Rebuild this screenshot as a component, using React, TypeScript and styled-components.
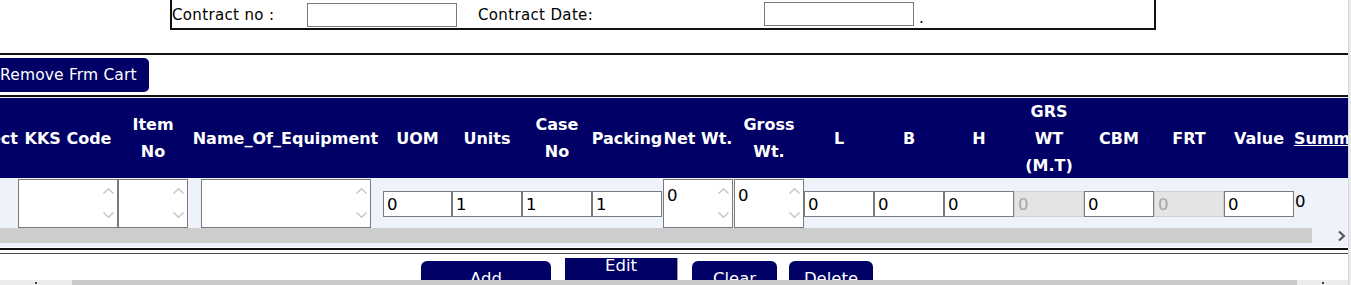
import React from "react";
import styled, { createGlobalStyle } from "styled-components";

const NAVY = "#000066";

const Global = createGlobalStyle`
  html, body { margin: 0; padding: 0; background: #fff; overflow: hidden; }
  body { font-family: "DejaVu Sans", "Verdana", sans-serif; color: #000; }
  * { box-sizing: border-box; }
`;

const Page = styled.div`
  width: 1348px;
  height: 285px;
  overflow: hidden;
  position: relative;
`;

const ContractBox = styled.div`
  margin-left: 170px;
  width: 986px;
  height: 30px;
  border-left: 2px solid #111;
  border-right: 2px solid #111;
  border-bottom: 2px solid #111;
  display: flex;
  align-items: center;
`;

const Label = styled.span<{ $w: number; $ml?: number }>`
  width: ${(p) => p.$w}px;
  margin-left: ${(p) => p.$ml ?? 0}px;
  font-size: 15px;
  letter-spacing: 0.35px;
  white-space: nowrap;
  padding-top: 2px;
`;

const FieldBox = styled.div<{ $mt?: number }>`
  width: 150px;
  height: 24px;
  border: 1px solid #7a7a7a;
  background: #fff;
  margin-top: ${(p) => p.$mt ?? 0}px;
`;

const Dot = styled.span`
  margin-left: 5px;
  font-size: 15px;
  padding-top: 8px;
`;

const Rule = styled.div<{ $mt: number; $c?: string; $h?: number }>`
  margin-top: ${(p) => p.$mt}px;
  height: ${(p) => p.$h ?? 2}px;
  background: ${(p) => p.$c ?? "#111"};
  width: 1348px;
`;

const CartButton = styled.button`
  display: block;
  margin-top: 3px;
  height: 34px;
  width: 149px;
  padding: 0;
  text-align: left;
  border: none;
  border-radius: 0 5px 5px 0;
  background: ${NAVY};
  color: #fff;
  font-family: "DejaVu Sans", sans-serif;
  font-size: 15.5px;
  letter-spacing: 0.15px;
`;

const Panel = styled.div`
  margin-top: 3px;
  border-top: 2px solid #111;
  padding-top: 1px;
  padding-bottom: 4px;
  background: #eef2fa;
  width: 1348px;
  overflow: hidden;
`;

const COLS = [18, 100, 70, 195, 69, 70, 70, 70, 72, 70, 70, 70, 70, 70, 70, 70, 70, 120];

const Grid = styled.div`
  display: grid;
  grid-template-columns: ${COLS.map((c) => c + "px").join(" ")};
  grid-template-rows: 80px 50px;
  width: max-content;
`;

const HeadCell = styled.div<{ $align?: "start" | "center" | "end"; $link?: boolean }>`
  background: ${NAVY};
  color: #fff;
  font-weight: bold;
  font-size: 16px;
  line-height: 27px;
  display: flex;
  align-items: center;
  justify-content: ${(p) => (p.$align === "start" ? "flex-start" : p.$align === "end" ? "flex-end" : "center")};
  text-align: center;
  white-space: nowrap;
  overflow: ${(p) => (p.$align === "end" ? "hidden" : "visible")};
  text-decoration: ${(p) => (p.$link ? "underline" : "none")};
`;

const DataCell = styled.div<{ $align?: "start" | "center"; $end?: boolean }>`
  display: flex;
  justify-content: ${(p) => (p.$align === "start" ? "flex-start" : "center")};
  align-items: ${(p) => (p.$end ? "flex-end" : "center")};
`;

const CellInput = styled.div<{ $w?: number; $disabled?: boolean }>`
  width: ${(p) => p.$w ?? 70}px;
  height: 26px;
  border: 1px solid ${(p) => (p.$disabled ? "#cfcfcf" : "#7a7a7a")};
  background: ${(p) => (p.$disabled ? "#e4e4e4" : "#fff")};
  color: ${(p) => (p.$disabled ? "#a6a6a6" : "#000")};
  font-size: 16.5px;
  line-height: 26px;
  padding-left: 3px;
  margin-top: 2px;
`;

const TextBox = styled.div<{ $w: number }>`
  width: ${(p) => p.$w}px;
  height: 49px;
  border: 1px solid #7a7a7a;
  background: #fff;
  display: flex;
`;

const TextValue = styled.div`
  flex: 1;
  font-size: 16.5px;
  line-height: 19px;
  padding: 6px 0 0 3px;
`;

const ScrollCol = styled.div`
  width: 17px;
  display: flex;
  flex-direction: column;
  justify-content: space-between;
  align-items: center;
  padding: 7px 0 8px;
`;

const SummText = styled.span`
  font-size: 16.5px;
  padding-left: 1px;
  margin-top: -4px;
`;

const HScroll = styled.div`
  display: flex;
  height: 15px;
  width: 1348px;
`;

const HThumb = styled.div`
  flex: 1;
  background: #cdcdcd;
`;

const HArrow = styled.div`
  width: 36px;
  display: flex;
  align-items: center;
  justify-content: flex-end;
  padding-right: 2px;
`;

const ButtonBar = styled.div`
  display: flex;
  align-items: flex-start;
  padding: 4px 0 0 421px;
`;

const ActionButton = styled.button<{ $w: number; $ml?: number; $square?: boolean }>`
  width: ${(p) => p.$w}px;
  height: 34px;
  margin-left: ${(p) => p.$ml ?? 0}px;
  margin-top: ${(p) => (p.$square ? 0 : 3)}px;
  border: none;
  border-right: ${(p) => (p.$square ? "1px solid #9a9a9a" : "none")};
  border-radius: ${(p) => (p.$square ? "0" : "6px 6px 0 0")};
  background: ${NAVY};
  color: #fff;
  font-family: "DejaVu Sans", sans-serif;
  font-size: 16.5px;
  line-height: ${(p) => (p.$square ? 15 : 19)}px;
  padding: ${(p) => (p.$square ? "0" : "8px 0 0")};
  display: flex;
  justify-content: center;
  align-items: flex-start;
`;

const PageHScroll = styled.div`
  position: fixed;
  left: 0;
  right: 3px;
  bottom: 0;
  height: 5px;
  display: flex;
`;

const PageHEnd = styled.div<{ $w: number }>`
  width: ${(p) => p.$w}px;
  background: #ececec;
  display: flex;
  justify-content: center;
`;

const PageHThumb = styled.div`
  flex: 1;
  background: #c9c9c9;
`;

const Tick = styled.div`
  width: 2px;
  height: 2px;
  margin-top: 2px;
  background: #444;
`;

const PageVScroll = styled.div`
  position: fixed;
  top: 0;
  right: 0;
  bottom: 0;
  width: 3px;
  background: #eaeaea;
  border-left: 1px solid #d8d8d8;
`;

const Chevron = ({ dir }: { dir: "up" | "down" }) => (
  <svg width="13" height="8" viewBox="0 0 13 8">
    <polyline
      points={dir === "up" ? "1.5,6.5 6.5,1.8 11.5,6.5" : "1.5,1.5 6.5,6.2 11.5,1.5"}
      fill="none"
      stroke="#c6c6c6"
      strokeWidth="1.5"
    />
  </svg>
);

const Area = ({ w, value }: { w: number; value?: string }) => (
  <TextBox $w={w}>
    <TextValue>{value ?? ""}</TextValue>
    <ScrollCol>
      <Chevron dir="up" />
      <Chevron dir="down" />
    </ScrollCol>
  </TextBox>
);

export default function App() {
  return (
    <Page>
      <Global />
      <ContractBox>
        <Label $w={135} $ml={0}>Contract no :</Label>
        <FieldBox $mt={2} />
        <Label $w={286} $ml={21}>Contract Date:</Label>
        <FieldBox $mt={0} />
        <Dot>.</Dot>
      </ContractBox>
      <Rule $mt={23} />
      <CartButton>Remove Frm Cart</CartButton>
      <Panel>
        <Grid>
          <HeadCell $align="end">Select</HeadCell>
          <HeadCell>KKS Code</HeadCell>
          <HeadCell>Item<br />No</HeadCell>
          <HeadCell>Name_Of_Equipment</HeadCell>
          <HeadCell>UOM</HeadCell>
          <HeadCell>Units</HeadCell>
          <HeadCell>Case<br />No</HeadCell>
          <HeadCell>Packing</HeadCell>
          <HeadCell>Net Wt.</HeadCell>
          <HeadCell>Gross<br />Wt.</HeadCell>
          <HeadCell>L</HeadCell>
          <HeadCell>B</HeadCell>
          <HeadCell>H</HeadCell>
          <HeadCell>GRS<br />WT<br />(M.T)</HeadCell>
          <HeadCell>CBM</HeadCell>
          <HeadCell>FRT</HeadCell>
          <HeadCell>Value</HeadCell>
          <HeadCell $align="start" $link>Summary</HeadCell>

          <DataCell />
          <DataCell $end><Area w={100} /></DataCell>
          <DataCell $end><Area w={70} /></DataCell>
          <DataCell $end><Area w={170} /></DataCell>
          <DataCell><CellInput $w={69}>0</CellInput></DataCell>
          <DataCell><CellInput>1</CellInput></DataCell>
          <DataCell><CellInput>1</CellInput></DataCell>
          <DataCell><CellInput>1</CellInput></DataCell>
          <DataCell $end><Area w={70} value="0" /></DataCell>
          <DataCell $end><Area w={70} value="0" /></DataCell>
          <DataCell><CellInput>0</CellInput></DataCell>
          <DataCell><CellInput>0</CellInput></DataCell>
          <DataCell><CellInput>0</CellInput></DataCell>
          <DataCell><CellInput $disabled>0</CellInput></DataCell>
          <DataCell><CellInput>0</CellInput></DataCell>
          <DataCell><CellInput $disabled>0</CellInput></DataCell>
          <DataCell><CellInput>0</CellInput></DataCell>
          <DataCell $align="start"><SummText>0</SummText></DataCell>
        </Grid>
        <HScroll>
          <HThumb />
          <HArrow>
            <svg width="9" height="12" viewBox="0 0 9 12">
              <polyline points="2,1.5 7,6 2,10.5" fill="none" stroke="#505050" strokeWidth="2" />
            </svg>
          </HArrow>
        </HScroll>
      </Panel>
      <Rule $mt={1} />
      <Rule $mt={3} $h={1} $c="#4a4a4a" />
      <ButtonBar>
        <ActionButton $w={130}>Add</ActionButton>
        <ActionButton $w={113} $ml={14} $square>Edit</ActionButton>
        <ActionButton $w={85} $ml={14}>Clear</ActionButton>
        <ActionButton $w={84} $ml={12}>Delete</ActionButton>
      </ButtonBar>
      <PageHScroll>
        <PageHEnd $w={72}><Tick /></PageHEnd>
        <PageHThumb />
        <PageHEnd $w={51}><Tick /></PageHEnd>
      </PageHScroll>
      <PageVScroll />
    </Page>
  );
}
